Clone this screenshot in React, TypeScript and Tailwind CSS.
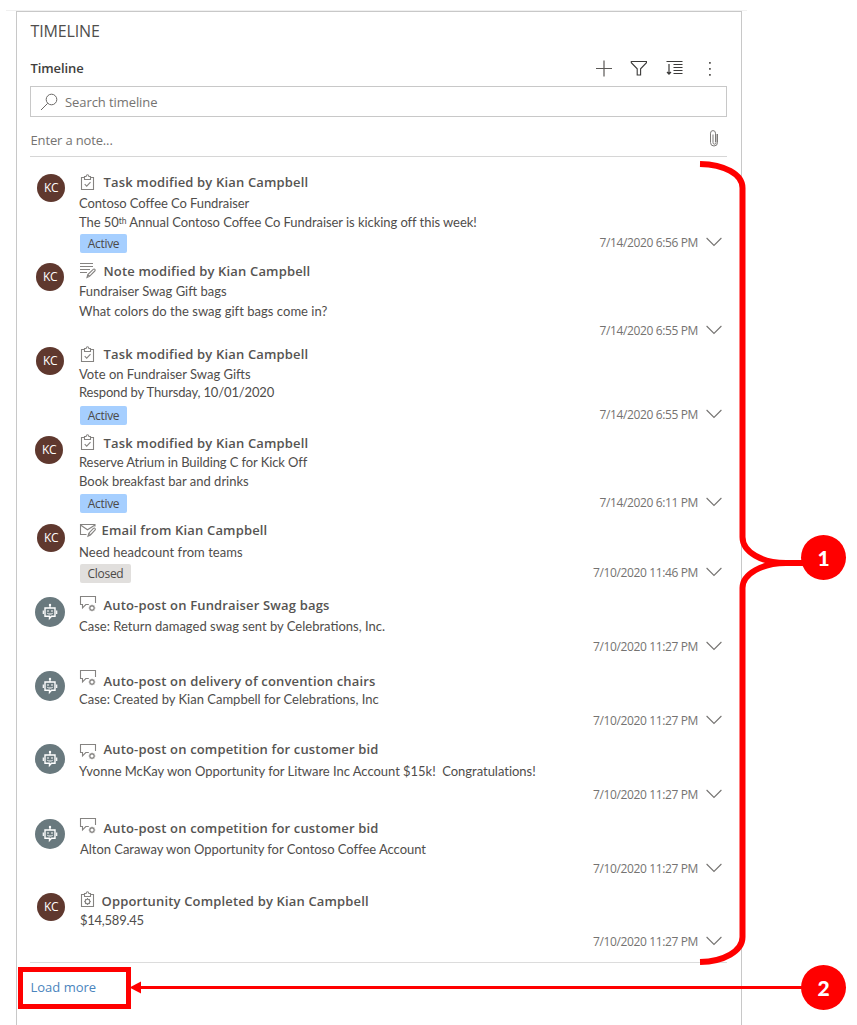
import { Fragment } from "react";
import type { ReactNode } from "react";

type IconKind = "task" | "note" | "email" | "post" | "done";

interface Entry {
  avatar: "kc" | "bot";
  icon: IconKind;
  title: string;
  lines: { text: ReactNode; className: string }[];
  status?: { label: string; className: string };
  date: string;
  row: string;
  avatarPos: string;
  iconPos: string;
  titlePos: string;
}

const ACTIVE = "bg-[#a6cfff] w-[47px]";
const CLOSED = "bg-[#e1dfdd] w-[51px]";

const entries: Entry[] = [
  {
    avatar: "kc",
    icon: "task",
    title: "Task modified by Kian Campbell",
    lines: [
      { text: "Contoso Coffee Co Fundraiser", className: "mt-[2px] tracking-[-0.08px]" },
      {
        text: (
          <Fragment>
            The 50<span className="relative -top-[3px] text-[8.5px]">th</span> Annual Contoso Coffee Co Fundraiser is
            kicking off this week!
          </Fragment>
        ),
        className: "mt-px tracking-[-0.06px]",
      },
    ],
    status: { label: "Active", className: `mt-[3px] ${ACTIVE}` },
    date: "7/14/2020 6:56 PM",
    row: "h-[86px]",
    avatarPos: "mt-[6px] ml-[7px]",
    iconPos: "mt-[6px]",
    titlePos: "mt-[4px] ml-[24px]",
  },
  {
    avatar: "kc",
    icon: "note",
    title: "Note modified by Kian Campbell",
    lines: [
      { text: "Fundraiser Swag Gift bags", className: "mt-px" },
      { text: "What colors do the swag gift bags come in?", className: "mt-[2px] tracking-[0.03px]" },
    ],
    date: "7/14/2020 6:55 PM",
    row: "h-[88px]",
    avatarPos: "mt-[9px] ml-[6px]",
    iconPos: "mt-[8px]",
    titlePos: "mt-[7px] ml-[24px]",
  },
  {
    avatar: "kc",
    icon: "task",
    title: "Task modified by Kian Campbell",
    lines: [
      { text: "Vote on Fundraiser Swag Gifts", className: "mt-px" },
      { text: "Respond by Thursday, 10/01/2020", className: "mt-0 tracking-[-0.15px]" },
    ],
    status: { label: "Active", className: `mt-[5px] ${ACTIVE}` },
    date: "7/14/2020 6:55 PM",
    row: "h-[84px]",
    avatarPos: "mt-[5px] ml-[6px]",
    iconPos: "mt-[4px]",
    titlePos: "mt-[2px] ml-[24px]",
  },
  {
    avatar: "kc",
    icon: "task",
    title: "Task modified by Kian Campbell",
    lines: [
      { text: "Reserve Atrium in Building C for Kick Off", className: "mt-0 tracking-[-0.1px]" },
      { text: "Book breakfast bar and drinks", className: "mt-px" },
    ],
    status: { label: "Active", className: `mt-[4px] ${ACTIVE}` },
    date: "7/14/2020 6:11 PM",
    row: "h-[88px]",
    avatarPos: "mt-[10px] ml-[5px]",
    iconPos: "mt-[8px]",
    titlePos: "mt-[7px] ml-[24px]",
  },
  {
    avatar: "kc",
    icon: "email",
    title: "Email from Kian Campbell",
    lines: [{ text: "Need headcount from teams", className: "mt-[3px] tracking-[0.05px]" }],
    status: { label: "Closed", className: `mt-[3px] ${CLOSED}` },
    date: "7/10/2020 11:46 PM",
    row: "h-[70px]",
    avatarPos: "mt-[10px] ml-[7px]",
    iconPos: "mt-[9px]",
    titlePos: "mt-[6px] ml-[22px]",
  },
  {
    avatar: "bot",
    icon: "post",
    title: "Auto-post on Fundraiser Swag bags",
    lines: [{ text: "Case: Return damaged swag sent by Celebrations, Inc.", className: "mt-[2px]" }],
    date: "7/10/2020 11:27 PM",
    row: "h-[74px]",
    avatarPos: "mt-[13px] ml-[5px]",
    iconPos: "mt-[11px]",
    titlePos: "mt-[11px] ml-[24px]",
  },
  {
    avatar: "bot",
    icon: "post",
    title: "Auto-post on delivery of convention chairs",
    lines: [{ text: "Case: Created by Kian Campbell for Celebrations, Inc", className: "-mt-px" }],
    date: "7/10/2020 11:27 PM",
    row: "h-[74px]",
    avatarPos: "mt-[13px] ml-[5px]",
    iconPos: "mt-[11px]",
    titlePos: "mt-[13px] ml-[24px]",
  },
  {
    avatar: "bot",
    icon: "post",
    title: "Auto-post on competition for customer bid",
    lines: [
      {
        text: "Yvonne McKay won Opportunity for Litware Inc Account $15k!\u00a0 Congratulations!",
        className: "mt-[3px] tracking-[-0.03px]",
      },
    ],
    date: "7/10/2020 11:27 PM",
    row: "h-[74px]",
    avatarPos: "mt-[12px] ml-[5px]",
    iconPos: "mt-[11px]",
    titlePos: "mt-[7px] ml-[24px]",
  },
  {
    avatar: "bot",
    icon: "post",
    title: "Auto-post on competition for customer bid",
    lines: [
      { text: "Alton Caraway won Opportunity for Contoso Coffee Account", className: "mt-[2px] ml-px tracking-[-0.03px]" },
    ],
    date: "7/10/2020 11:27 PM",
    row: "h-[74px]",
    avatarPos: "mt-[13px] ml-[5px]",
    iconPos: "mt-[11px]",
    titlePos: "mt-[12px] ml-[24px]",
  },
  {
    avatar: "kc",
    icon: "done",
    title: "Opportunity Completed by Kian Campbell",
    lines: [
      { text: "$14,589.45", className: "mt-0 ml-px font-['Open_Sans','Noto_Sans',sans-serif] tracking-[-0.25px]" },
    ],
    date: "7/10/2020 11:27 PM",
    row: "h-[73px]",
    avatarPos: "mt-[13px] ml-[7px]",
    iconPos: "mt-[11px]",
    titlePos: "mt-[11px] ml-[22px]",
  },
];

function EntryIcon({ kind }: { kind: IconKind }) {
  return (
    <svg width="18" height="18" viewBox="0 0 18 18" fill="none" stroke="#858381" strokeWidth="1.1" className="shrink-0">
      {(kind === "task" || kind === "done") && (
        <path d="M5.500 3.500H2.500v12h12v-12h-3M5.500 5.500v-3h1.600C7.300 1.200 7.800.8 8.500.8s1.200.4 1.400 1.700h1.600v3z" />
      )}
      {kind === "task" && <path d="M5.700 10.200l2 2 3.800-4" />}
      {kind === "done" && (
        <Fragment>
          <circle cx="8.500" cy="10.500" r="2.300" />
          <path d="M8.500 7v1M8.500 13v1M5.200 10.500h1M10.800 10.500h1M6.200 8.200l.7.700M10.100 12.100l.7.700M10.800 8.200l-.7.700M6.900 12.100l-.7.700" />
        </Fragment>
      )}
      {kind === "note" && (
        <Fragment>
          <path d="M1 1.500h13M1 4.500h13M1 7.500h10M1 10.500h7" />
          <path d="M8 15.500l.8-3 5.400-5.200c.6-.5 1.300-.4 1.700.1s.4 1.100-.1 1.600l-5.300 5.400zM8.800 12.500l1.700 1.900" />
        </Fragment>
      )}
      {kind === "email" && (
        <Fragment>
          <path d="M7.500 11.500h-6v-10h14.500v2M1.500 2l7 4.800L16 2" />
          <path d="M9 13.200l.8-3 4.600-4.800c.6-.5 1.300-.4 1.700.1s.4 1.100-.1 1.600l-4.600 4.900zM9.800 10.200l1.600 1.700" />
        </Fragment>
      )}
      {kind === "post" && (
        <Fragment>
          <path d="M16.500 8V1.500H1.500v8h2v3.300l3.300-3.300h3" />
          <circle cx="13" cy="13" r="2.100" />
          <path d="M13 9.700v1.200M13 15.100v1.200M9.700 13h1.200M15.100 13h1.200M10.700 10.700l.8.800M14.500 14.500l.8.800M15.300 10.700l-.8.800M11.500 14.500l-.8.800" />
        </Fragment>
      )}
    </svg>
  );
}

function Avatar({ kind }: { kind: "kc" | "bot" }) {
  if (kind === "kc") {
    return (
      <div className="flex size-[28px] items-center justify-center rounded-full bg-[#5f382e] text-[12px] leading-none tracking-[-0.4px] text-white">
        KC
      </div>
    );
  }
  return (
    <div className="flex size-[30px] items-center justify-center rounded-full bg-[#69797e]">
      <svg width="16" height="18" viewBox="0 0 16 18" fill="none" stroke="white">
        <path d="M8 2v3" strokeWidth="1.200" />
        <circle cx="8" cy="2" r="1.200" fill="white" stroke="none" />
        <path d="M3 5h10v8.200H9.500L7.500 15.500v-2.300H3z" strokeWidth="1.400" />
        <path d="M1.300 7.500v3.500M14.700 7.500v3.500" strokeWidth="1.200" />
        <path d="M6 7.300v1.500M10 7.300v1.500" strokeWidth="1.300" />
        <path d="M5.300 10.300c1.500 1 3.900 1 5.400 0" strokeWidth="1" />
      </svg>
    </div>
  );
}

function TimelineRow({ entry }: { entry: Entry }) {
  return (
    <li className={`flex ${entry.row}`}>
      <div className="w-[49px] shrink-0">
        <div className={entry.avatarPos}>
          <Avatar kind={entry.avatar} />
        </div>
      </div>
      <div className="min-w-0 flex-1">
        <div className="flex items-start">
          <div className={`h-0 w-0 ${entry.iconPos}`}>
            <EntryIcon kind={entry.icon} />
          </div>
          <h3
            className={`pl-[0.5px] text-[13px] leading-[20px] font-semibold tracking-[0.16px] whitespace-nowrap text-[#565452] ${entry.titlePos}`}
          >
            {entry.title}
          </h3>
        </div>
        {entry.lines.map((line, i) => (
          <p
            key={i}
            className={`h-[18px] font-[Lato,'Open_Sans',sans-serif] text-[13px] leading-[18px] whitespace-nowrap text-[#4f4d4b] ${line.className}`}
          >
            {line.text}
          </p>
        ))}
        {entry.status && (
          <div
            className={`ml-px flex h-[19px] items-center justify-center rounded-[2px] pt-px text-[12px] tracking-[-0.3px] text-[#4c4a48] ${entry.status.className}`}
          >
            {entry.status.label}
          </div>
        )}
      </div>
      <div className="flex w-0 shrink-0 items-center justify-end gap-[8px] self-end pr-[5px] pb-[3px]">
        <time className="-mb-[2px] text-[12px] leading-[20px] tracking-[-0.37px] whitespace-nowrap text-[#757371]">
          {entry.date}
        </time>
        <svg width="16" height="10" viewBox="0 0 16 10" fill="none" stroke="#757371" strokeWidth="1.100" className="shrink-0">
          <path d="M.6 1L8 8.400 15.400 1" />
        </svg>
      </div>
    </li>
  );
}

function Toolbar() {
  return (
    <div className="flex items-center gap-[19px] pr-[9px] text-[#3b3a39]">
      <svg width="17" height="17" viewBox="0 0 17 17" stroke="#5a5856" strokeWidth="1.200" className="-mr-px">
        <path d="M9 .5v16M1 8.500h16" />
      </svg>
      <svg width="17" height="16" viewBox="0 0 17 16" fill="none" stroke="#3b3a39" strokeWidth="1.100">
        <path d="M1.300 1.500h15.200v1.200L10.600 8.800v6.200H7.200V8.800L1.300 2.700z" />
      </svg>
      <svg width="17" height="16" viewBox="0 0 17 16" fill="none" stroke="#3b3a39" strokeWidth="1.200">
        <path d="M.5 1.500h16M7.500 4.500h9M7.500 7.500h9M7.500 10.500h9M7.500 13.500h9M3 4v10M1 12l2 2.200 2-2.200" />
      </svg>
      <svg width="16" height="16" viewBox="0 0 16 16" fill="#5a5856">
        <path d="M7 2h1.800v1.800H7zM7 8h1.800v1.800H7zM7 14h1.800v1.800H7z" />
      </svg>
    </div>
  );
}

function Annotations() {
  return (
    <div className="pointer-events-none absolute inset-0">
      <svg width="857" height="1025" viewBox="0 0 857 1025" fill="none" stroke="#ff0000" className="absolute inset-0">
        <path d="M700 164C724 164.500 742.500 174 742.500 188V537C742.500 552 762 563 786 563H806" strokeWidth="6" />
        <path d="M806 563H786C762 563 742.500 574 742.500 588V937C742.500 951 724 961.500 700 962" strokeWidth="6" />
        <path d="M139 987.500H803" strokeWidth="3" />
        <path d="M129.500 987.500L141 981.500V993.500Z" fill="#ff0000" stroke="none" />
      </svg>
      <div className="absolute top-[967px] left-[18px] h-[42px] w-[113px] border-[5px] border-[#ff0000]" />
      <div className="absolute top-[535px] left-[801px] flex size-[45px] items-center justify-center rounded-full bg-[#ff0000] font-[Lato,sans-serif] text-[21px] leading-none font-black text-white">
        1
      </div>
      <div className="absolute top-[965px] left-[801px] flex size-[45px] items-center justify-center rounded-full bg-[#ff0000] font-[Lato,sans-serif] text-[21px] leading-none font-black text-white">
        2
      </div>
    </div>
  );
}

export default function App() {
  return (
    <div className="relative h-[1025px] w-[857px] overflow-hidden bg-white pt-[10px] font-['Open_Sans','Noto_Sans',sans-serif]">
      <div className="ml-[6px] h-px w-[741px] bg-[#f0f0f0]" />
      <section className="ml-[16px] flex h-[1014px] w-[726px] flex-col border border-b-0 border-[#c8c8c8] pr-[14px] pl-[13px]">
        <h1 className="mt-[8px] pl-[0.5px] text-[16px] leading-[22px] tracking-[-0.15px] text-[#504e4c]">TIMELINE</h1>
        <div className="mt-[16px] flex h-[20px] items-center justify-between">
          <h2 className="pl-[0.5px] text-[13px] leading-[20px] font-semibold tracking-[-0.1px] text-[#403e3c]">Timeline</h2>
          <Toolbar />
        </div>
        <div className="mt-[8px] flex h-[31px] shrink-0 items-center border border-[#c8c8c8] pl-[9px]">
          <svg width="18" height="18" viewBox="0 0 18 18" fill="none" stroke="#6b6967" strokeWidth="1">
            <circle cx="11.500" cy="6.500" r="5.300" />
            <path d="M7.700 10.300L1 17" />
          </svg>
          <span className="ml-[7px] pt-[2px] text-[13px] tracking-[-0.08px] text-[#757371]">Search timeline</span>
        </div>
        <div className="flex h-[40px] shrink-0 items-center justify-between border-b border-[#d6d6d6] pt-[8px] pr-[8px]">
          <span className="pl-[0.5px] text-[13px] tracking-[-0.15px] text-[#757371]">Enter a note...</span>
          <svg width="10" height="17" viewBox="0 0 10 17" fill="none" stroke="#7c7a78" strokeWidth="1" className="-mt-[4px]">
            <path d="M7 4v8.500a1.500 1.700 0 01-3 0V4.500M1.500 5v7.500a3.500 3.500 0 007 0V4M1.500 5V3.200a2.500 2.600 0 015 0V12" />
          </svg>
        </div>
        <ul className="mt-[11px]">
          {entries.map((entry, i) => (
            <TimelineRow key={i} entry={entry} />
          ))}
        </ul>
        <div className="mt-[9px] h-px shrink-0 bg-[#dcdcdc]" />
        <a className="mt-[14px] pl-[0.5px] text-[13px] leading-[20px] text-[#4a84bd]">Load more</a>
      </section>
      <Annotations />
    </div>
  );
}
